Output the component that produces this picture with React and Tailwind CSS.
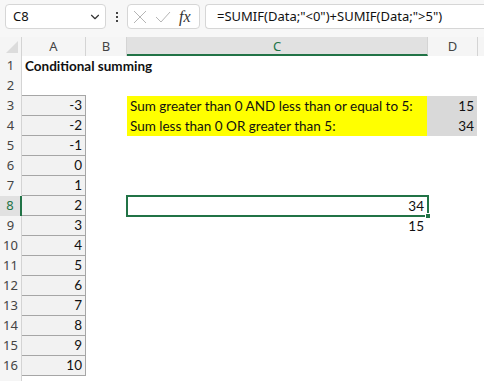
import { ChevronDown } from 'lucide-react';

const cellFont = { fontFamily: 'Lato, "Liberation Sans", sans-serif' };
const uiFont = { fontFamily: '"Noto Sans", "Open Sans", sans-serif' };

const data = [-3, -2, -1, 0, 1, 2, 3, 4, 5, 6, 7, 8, 9, 10];

function RowHead({ n, active }) {
  return (
    <div
      className={`flex h-full w-[22px] shrink-0 items-center justify-center border-r text-[13px] ${
        active ? 'border-r-2 border-r-[#217346] bg-[#e1e1e1] text-[#217346]' : 'border-r-[#d4d4d4] bg-[#f5f5f5] text-[#444]'
      }`}
      style={uiFont}
    >
      {n}
    </div>
  );
}

function Row({ n, label = n, children }) {
  return (
    <div className="flex h-[20px] text-[13.5px]" style={cellFont}>
      <RowHead n={label} active={n === 8} />
      {children}
    </div>
  );
}

export default function App() {
  return (
    <div className="h-[381px] w-[484px] overflow-hidden bg-white text-[#111]">
      {/* formula bar */}
      <div className="flex h-[37px] items-start bg-[#f7f7f7] pt-[4px]" style={uiFont}>
        <div className="ml-[5px] flex h-[25px] w-[101px] items-center justify-between rounded-[4px] border border-[#d6d6d6] bg-white pl-[7px] pr-[3px] text-[13px]">
          <span>C8</span>
          <ChevronDown className="h-[14px] w-[14px] text-[#333]" strokeWidth={2} />
        </div>
        <div className="flex h-[25px] w-[21px] flex-col items-center justify-center gap-[2px]">
          <span className="h-[2px] w-[2px] bg-[#444]" />
          <span className="h-[2px] w-[2px] bg-[#444]" />
          <span className="h-[2px] w-[2px] bg-[#444]" />
        </div>
        <div className="flex h-[25px] w-[73px] items-center rounded-[4px] border border-[#d6d6d6] bg-white">
          <svg className="ml-[5px]" width="14" height="14" viewBox="0 0 14 14" fill="none" stroke="#b5b5b5" strokeWidth="1">
            <path d="M1 1 L13 13 M13 1 L1 13" />
          </svg>
          <svg className="ml-[8px]" width="16" height="14" viewBox="0 0 16 14" fill="none" stroke="#b5b5b5" strokeWidth="1">
            <path d="M1 7 L6 12 L15 2" />
          </svg>
          <span className="ml-[8px] text-[16px] italic text-[#333]" style={{ fontFamily: '"Liberation Serif", serif' }}>
            fx
          </span>
        </div>
        <div className="ml-[5px] flex h-[25px] flex-1 items-center rounded-l-[4px] border border-r-0 border-[#d6d6d6] bg-white pl-[11px] text-[13px] whitespace-nowrap">
          =SUMIF(Data;"&lt;0")+SUMIF(Data;"&gt;5")
        </div>
      </div>

      {/* column headers */}
      <div className="flex h-[19px] bg-[#f5f5f5] text-[13px] text-[#444]" style={uiFont}>
        <div className="relative w-[22px] shrink-0 border-r border-[#d4d4d4]">
          <div className="absolute right-[3px] bottom-[3px] h-0 w-0 border-b-[12px] border-l-[12px] border-b-[#dcdcdc] border-l-transparent" />
        </div>
        <div className="flex w-[64px] shrink-0 items-center justify-center border-r border-[#d4d4d4]">A</div>
        <div className="flex w-[41px] shrink-0 items-center justify-center border-r border-[#d4d4d4]">B</div>
        <div className="flex w-[301px] shrink-0 items-center justify-center border-b-2 border-r border-b-[#217346] border-r-[#d4d4d4] bg-[#e1e1e1] pt-[2px] text-[#217346]">C</div>
        <div className="flex w-[50px] shrink-0 items-center justify-center border-r border-[#d4d4d4]">D</div>
        <div className="flex-1" />
      </div>

      <Row n={1}>
        <div className="flex items-center pl-[3px] font-bold whitespace-nowrap">Conditional summing</div>
      </Row>
      <Row n={2}>
        <div className="w-[64px] border-b border-[#a6a6a6]" />
      </Row>
      {data.map((v, i) => {
        const n = i + 3;
        return (
          <Row key={n} n={n}>
            <div className="flex w-[64px] shrink-0 items-center justify-end border-r border-b border-[#a6a6a6] bg-[#f2f2f2] pr-[3px]">
              {v}
            </div>
            <div className="w-[41px] shrink-0" />
            {n === 3 && (
              <>
                <div className="flex w-[300px] shrink-0 items-center bg-[#ffff00] pl-[3px] whitespace-nowrap">
                  Sum greater than 0 AND less than or equal to 5:
                </div>
                <div className="flex w-[50px] shrink-0 items-center justify-end bg-[#d9d9d9] pr-[3px]">15</div>
              </>
            )}
            {n === 4 && (
              <>
                <div className="flex w-[300px] shrink-0 items-center bg-[#ffff00] pl-[3px] whitespace-nowrap">
                  Sum less than 0 OR greater than 5:
                </div>
                <div className="flex w-[50px] shrink-0 items-center justify-end bg-[#d9d9d9] pr-[3px]">34</div>
              </>
            )}
            {n === 8 && (
              <div className="relative ml-[-1px] flex h-[22px] w-[303px] shrink-0 -translate-y-[1px] items-center justify-end border-2 border-[#217346] pr-[3px]">
                34
                <div className="absolute right-[-4px] bottom-[-4px] h-[6px] w-[6px] border border-white bg-[#217346]" />
              </div>
            )}
            {n === 9 && (
              <div className="flex w-[301px] shrink-0 items-center justify-end pr-[4px]">15</div>
            )}
          </Row>
        );
      })}
      <Row n={17} label="" />
    </div>
  );
}
